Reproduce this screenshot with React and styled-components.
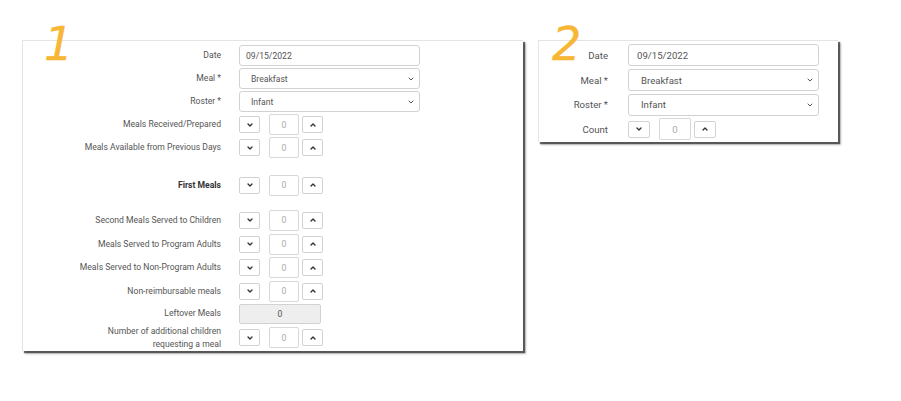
import React from 'react'
import styled, { createGlobalStyle, ThemeProvider } from 'styled-components'
import { ChevronDown, ChevronUp } from 'lucide-react'

const GlobalStyle = createGlobalStyle`
  body {
    margin: 0;
    background: #fff;
    font-family: Roboto, "Liberation Sans", sans-serif;
  }
`

// two screenshots pasted side by side, the second one a bit larger
const compact = { fs: 8.6, labelW: 198, gap: 18, field: 181, ctrlH: 21, rowH: 23, btnW: 21, btnH: 17, boxW: 30, boxGap: 9, padTop: 3, textPad: 6, selPad: 11 }
const roomy = { fs: 9.6, labelW: 69, gap: 20, field: 191, ctrlH: 22, rowH: 24.7, btnW: 22, btnH: 17, boxW: 32, boxGap: 9, padTop: 2, textPad: 8, selPad: 12 }

const Page = styled.div`
  display: flex;
  align-items: flex-start;
  gap: 15px;
  padding: 40px 0 48px 22px;
  min-height: 401px;
  box-sizing: border-box;
`
const PanelWrap = styled.div`
  position: relative;
`
const Panel = styled.div`
  width: ${p => p.$w}px;
  box-sizing: border-box;
  background: #fff;
  border-top: 1px solid #e4e4e4;
  border-left: 1px solid #e4e4e4;
  box-shadow: 2px 2px 1px 0 rgba(0, 0, 0, 0.55), 3px 3px 2px 0 rgba(0, 0, 0, 0.25);
  padding-top: ${p => p.theme.padTop}px;
  display: flex;
  flex-direction: column;
`
const Mark = styled.span`
  position: absolute;
  left: ${p => p.$x}px;
  top: -19px;
  font-family: "DejaVu Sans", sans-serif;
  font-style: oblique;
  font-size: 46px;
  line-height: 1;
  color: #f7b633;
  -webkit-text-stroke: 0.3px #f7b633;
`
const Row = styled.div`
  display: flex;
  align-items: center;
  gap: ${p => p.theme.gap}px;
  height: ${p => p.$h ?? p.theme.rowH}px;
  margin-top: ${p => p.$mt ?? 0}px;
`
const Label = styled.div`
  width: ${p => p.theme.labelW}px;
  flex-shrink: 0;
  text-align: right;
  font-size: ${p => p.theme.fs}px;
  line-height: 13px;
  color: ${p => (p.$strong ? '#333' : '#555')};
  font-weight: ${p => (p.$strong ? 700 : 400)};
`
const Field = styled.div`
  width: ${p => p.theme.field}px;
  height: ${p => p.theme.ctrlH}px;
  box-sizing: border-box;
  border: 1px solid #d2d2d2;
  border-radius: 3px;
  display: flex;
  align-items: center;
  justify-content: space-between;
  padding: 0 4px 0 ${p => (p.$select ? p.theme.selPad : p.theme.textPad)}px;
  font-size: ${p => p.theme.fs}px;
  color: #555;
  svg {
    color: #555;
  }
`
const Stepper = styled.div`
  display: flex;
  align-items: center;
`
const StepButton = styled.div`
  width: ${p => p.theme.btnW}px;
  height: ${p => p.theme.btnH}px;
  box-sizing: border-box;
  border: 1px solid #d2d2d2;
  border-radius: 2px;
  display: flex;
  align-items: center;
  justify-content: center;
  color: #333;
`
const CountBox = styled.div`
  width: ${p => p.theme.boxW}px;
  height: ${p => p.theme.ctrlH}px;
  box-sizing: border-box;
  margin: 0 3px 0 ${p => p.theme.boxGap}px;
  border: 1px solid #d8d8d8;
  border-radius: 2px;
  display: flex;
  align-items: center;
  justify-content: center;
  font-size: ${p => p.theme.fs}px;
  color: #aaa;
`
const ReadOnlyBox = styled.div`
  width: 82px;
  height: 20px;
  box-sizing: border-box;
  border: 1px solid #d2d2d2;
  border-radius: 2px;
  background: #eee;
  display: flex;
  align-items: center;
  justify-content: center;
  font-size: ${p => p.theme.fs}px;
  color: #555;
`

const Counter = () => (
  <Stepper>
    <StepButton><ChevronDown size={8} strokeWidth={4} /></StepButton>
    <CountBox>0</CountBox>
    <StepButton><ChevronUp size={8} strokeWidth={4} /></StepButton>
  </Stepper>
)

const Select = ({ value }) => (
  <Field $select>
    {value}
    <ChevronDown size={8} strokeWidth={3} />
  </Field>
)

const CountRow = ({ label, strong, ...rest }) => (
  <Row {...rest}>
    <Label $strong={strong}>{label}</Label>
    <Counter />
  </Row>
)

const HeaderRows = () => (
  <>
    <Row>
      <Label>Date</Label>
      <Field>09/15/2022</Field>
    </Row>
    <Row>
      <Label>Meal *</Label>
      <Select value="Breakfast" />
    </Row>
    <Row>
      <Label>Roster *</Label>
      <Select value="Infant" />
    </Row>
  </>
)

export default function App() {
  return (
    <Page>
      <GlobalStyle />
      <ThemeProvider theme={compact}>
        <PanelWrap>
          <Panel $w={501}>
            <HeaderRows />
            <CountRow label="Meals Received/Prepared" />
            <CountRow label="Meals Available from Previous Days" />
            <CountRow label="First Meals" strong $mt={14} $h={24} />
            <CountRow label="Second Meals Served to Children" $mt={11} $h={24} />
            <CountRow label="Meals Served to Program Adults" $h={24} />
            <CountRow label="Meals Served to Non-Program Adults" $h={23} />
            <CountRow label="Non-reimbursable meals" $h={24} />
            <Row $h={21}>
              <Label>Leftover Meals</Label>
              <ReadOnlyBox>0</ReadOnlyBox>
            </Row>
            <CountRow
              label={<>Number of additional children<br />requesting a meal</>}
              $h={27}
            />
          </Panel>
          <Mark $x={22}>1</Mark>
        </PanelWrap>
      </ThemeProvider>
      <ThemeProvider theme={roomy}>
        <PanelWrap>
          <Panel $w={300}>
            <HeaderRows />
            <CountRow label="Count" />
          </Panel>
          <Mark $x={14}>2</Mark>
        </PanelWrap>
      </ThemeProvider>
    </Page>
  )
}
